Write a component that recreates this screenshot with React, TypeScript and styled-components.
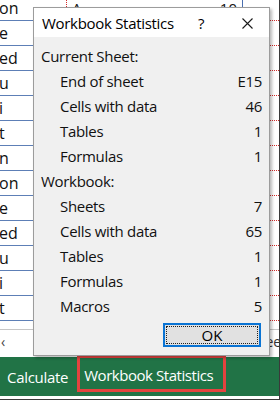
import React from "react";
import styled, { createGlobalStyle, css } from "styled-components";

const UI_FONT = `"Open Sans", "Noto Sans", "DejaVu Sans", sans-serif`;
const CELL_FONT = `"Open Sans", "Liberation Sans", sans-serif`;

const GlobalStyle = createGlobalStyle`
  html, body {
    margin: 0;
    padding: 0;
    background: #fff;
  }
  * {
    box-sizing: border-box;
  }
`;

type SheetRow = {
  name: string;
  top?: string;
  value?: string;
};

const sheetRows: SheetRow[] = [
  { name: "on", top: "A", value: "10" },
  { name: "e" },
  { name: "ed" },
  { name: "u" },
  { name: "i" },
  { name: "t" },
  { name: "n" },
  { name: "on" },
  { name: "e" },
  { name: "ed" },
  { name: "u" },
  { name: "i" },
  { name: "t" },
];

type Stat = { label: string; value?: string; header?: boolean };

const stats: Stat[] = [
  { label: "Current Sheet:", header: true },
  { label: "End of sheet", value: "E15" },
  { label: "Cells with data", value: "46" },
  { label: "Tables", value: "1" },
  { label: "Formulas", value: "1" },
  { label: "Workbook:", header: true },
  { label: "Sheets", value: "7" },
  { label: "Cells with data", value: "65" },
  { label: "Tables", value: "1" },
  { label: "Formulas", value: "1" },
  { label: "Macros", value: "5" },
];

const App: React.FC = () => {
  return (
    <>
      <GlobalStyle />
      <Screen>
        <Sheet>
          <Rows>
            {sheetRows.map((row, i) => (
              <Row key={i}>
                <NameCell>{row.name}</NameCell>
                <PlainCell $dottedRight />
                <TextCell>{row.top}</TextCell>
                <NumberCell>{row.value}</NumberCell>
                <PlainCell />
                <MarkCell />
              </Row>
            ))}
          </Rows>
          <TabBar>
            <TabArrow>‹</TabArrow>
            <Tab>Sheet1</Tab>
          </TabBar>
        </Sheet>

        <StatusBar>
          <StatusItem>Calculate</StatusItem>
          <StatusItem $highlight>Workbook Statistics</StatusItem>
        </StatusBar>

        <Dialog>
          <TitleBar>
            <Title>Workbook Statistics</Title>
            <HelpButton>?</HelpButton>
            <CloseButton>
              <svg width="11" height="11" viewBox="0 0 11 11">
                <path d="M0.5 0.5 L10.5 10.5 M10.5 0.5 L0.5 10.5" stroke="#1a1a1a" strokeWidth="1.1" />
              </svg>
            </CloseButton>
          </TitleBar>
          <DialogBody>
            <StatList>
              {stats.map((s, i) => (
                <StatRow key={i} $header={s.header}>
                  <span>{s.label}</span>
                  {s.value && <span>{s.value}</span>}
                </StatRow>
              ))}
            </StatList>
            <Footer>
              <OkButton>
                <FocusRing>OK</FocusRing>
              </OkButton>
            </Footer>
          </DialogBody>
        </Dialog>
      </Screen>
    </>
  );
};

export default App;

// Styled Components
const Screen = styled.div`
  position: relative;
  width: 280px;
  height: 400px;
  overflow: hidden;
  display: flex;
  flex-direction: column;
  background: #fff;
  border-right: 1px solid #3a3a3a;
  border-bottom: 1px solid #3a3a3a;
`;

const Sheet = styled.div`
  flex: none;
  height: 357px;
  display: flex;
  flex-direction: column;
  overflow: hidden;
`;

const Rows = styled.div`
  margin-top: -4px;
  display: flex;
  flex-direction: column;
`;

const Row = styled.div`
  display: grid;
  grid-template-columns: 33px 34px 140px 36px 27px 1fr;
  height: 25px;
`;

const NameCell = styled.div`
  border-bottom: 1px solid #5d7fb6;
  font-family: ${CELL_FONT};
  font-size: 16px;
  line-height: 25px;
  color: #111;
  white-space: nowrap;
  overflow: hidden;
  margin-left: -1px;
`;

const PlainCell = styled.div<{ $dottedRight?: boolean }>`
  ${(p) =>
    p.$dottedRight &&
    css`
      border-right: 1px dotted #d42a2a;
    `}
`;

const TextCell = styled.div`
  font-family: ${CELL_FONT};
  font-size: 15px;
  line-height: 25px;
  padding-left: 5px;
  color: #111;
`;

const NumberCell = styled.div`
  font-family: ${CELL_FONT};
  font-size: 15px;
  line-height: 25px;
  text-align: right;
  padding-right: 5px;
  color: #111;
  border-right: 1px solid #4a6fb0;
`;

const MarkCell = styled.div`
  border-bottom: 1px dotted #d42a2a;
`;

const TabBar = styled.div`
  margin-top: 8px;
  flex: 1;
  display: flex;
  align-items: flex-start;
  border-top: 1px solid #c6c6c6;
  font-family: ${UI_FONT};
  font-size: 14px;
  color: #333;
`;

const TabArrow = styled.span`
  width: 12px;
  padding-left: 1px;
  line-height: 24px;
  font-size: 14px;
  color: #444;
`;

const Tab = styled.span`
  margin-left: 244px;
  line-height: 22px;
  padding-top: 1px;
  white-space: nowrap;
`;

const StatusBar = styled.div`
  flex: none;
  height: 39px;
  display: flex;
  align-items: center;
  gap: 9px;
  padding-left: 7px;
  background: #217346;
  color: #fff;
  font-family: ${UI_FONT};
  font-size: 15px;
`;

const StatusItem = styled.div<{ $highlight?: boolean }>`
  white-space: nowrap;
  letter-spacing: -0.3px;
  ${(p) =>
    p.$highlight &&
    css`
      align-self: flex-start;
      margin-top: -2px;
      width: 149px;
      height: 37px;
      padding-left: 4px;
      border: 3px solid #e4433f;
      display: flex;
      align-items: center;
      padding-top: 2px;
      letter-spacing: -0.45px;
    `}
`;

const Dialog = styled.div`
  position: absolute;
  left: 33px;
  top: 7px;
  width: 237px;
  height: 349px;
  display: flex;
  flex-direction: column;
  background: #f0f0f0;
  border: 1px solid #9c9c9c;
  box-shadow: 2px 2px 3px rgba(0, 0, 0, 0.28);
  font-family: ${UI_FONT};
  color: #000;
`;

const TitleBar = styled.div`
  height: 29px;
  display: flex;
  align-items: center;
  padding-left: 8px;
  padding-top: 1px;
  background: #fff;
`;

const Title = styled.span`
  font-size: 15px;
  letter-spacing: -0.3px;
  width: 156px;
`;

const HelpButton = styled.span`
  font-size: 15px;
  width: 44px;
`;

const CloseButton = styled.span`
  display: flex;
  align-items: center;
`;

const DialogBody = styled.div`
  flex: 1;
  display: flex;
  flex-direction: column;
  padding: 6px 7px 0 7px;
`;

const StatList = styled.div`
  display: flex;
  flex-direction: column;
`;

const StatRow = styled.div<{ $header?: boolean }>`
  height: 25px;
  display: flex;
  align-items: center;
  justify-content: space-between;
  font-size: 15px;
  letter-spacing: -0.3px;
  padding-left: ${(p) => (p.$header ? "0" : "19px")};
  color: #111;
`;

const Footer = styled.div`
  display: flex;
  justify-content: flex-end;
  padding-top: 5px;
  padding-right: 1px;
`;

const OkButton = styled.div`
  width: 98px;
  height: 24px;
  border: 2px solid #0a74d4;
  background: #e1e1e1;
  padding: 1px;
`;

const FocusRing = styled.div`
  height: 100%;
  border: 1px dotted #222;
  display: flex;
  align-items: center;
  justify-content: center;
  font-size: 15px;
  color: #000;
`;
